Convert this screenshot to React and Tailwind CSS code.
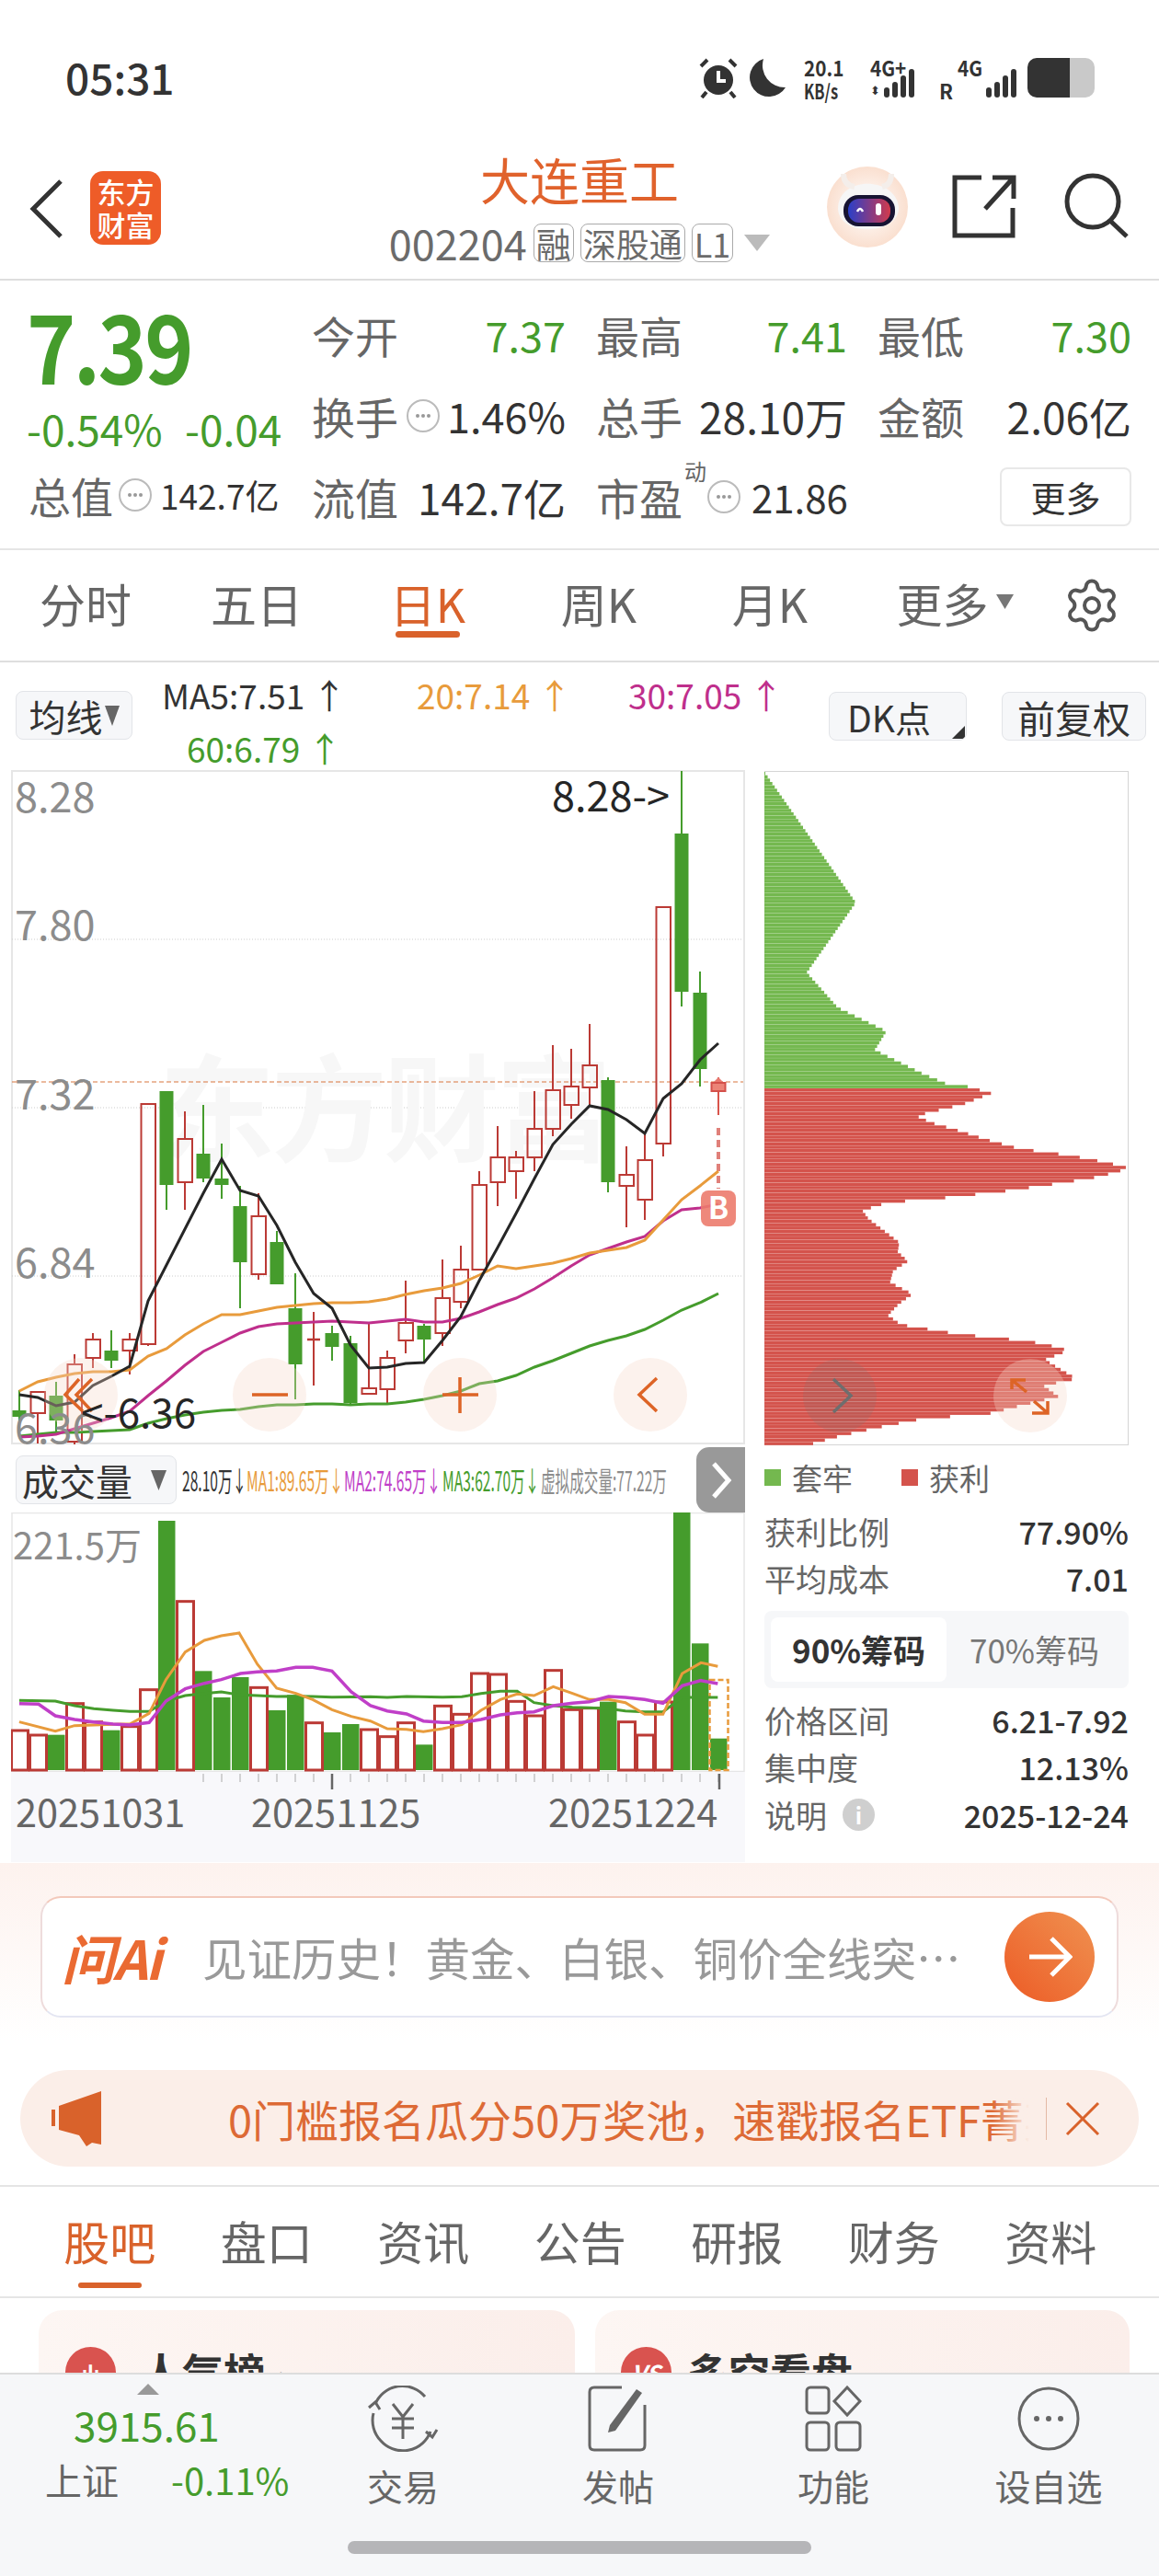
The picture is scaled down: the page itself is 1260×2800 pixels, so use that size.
import { Settings } from 'lucide-react';

const GREEN = '#459c2c';
const RED = '#bb3a35';
const ORANGE = '#e89b3c';

// [wickTop, bodyTop, bodyBottom, wickBottom, green?]
const candles = [
  [1512, 1534, 1541, 1556, true],
  [1514, 1514, 1537, 1570, false],
  [1503, 1518, 1545, 1560, true],
  [1473, 1484, 1568, 1571, false],
  [1450, 1457, 1477, 1488, false],
  [1447, 1469, 1480, 1488, true],
  [1450, 1457, 1469, 1495, false],
  [1201, 1201, 1462, 1464, false],
  [1187, 1187, 1289, 1316, true],
  [1209, 1239, 1286, 1316, false],
  [1202, 1255, 1282, 1286, true],
  [1244, 1282, 1289, 1304, true],
  [1290, 1312, 1373, 1423, true],
  [1298, 1323, 1386, 1392, false],
  [1339, 1351, 1397, 1397, true],
  [1385, 1423, 1484, 1522, true],
  [1427, 1457, 1457, 1507, false],
  [1442, 1450, 1465, 1480, true],
  [1453, 1461, 1526, 1528, true],
  [1440, 1510, 1516, 1516, false],
  [1469, 1477, 1511, 1527, false],
  [1393, 1439, 1458, 1472, false],
  [1440, 1442, 1457, 1482, true],
  [1370, 1412, 1450, 1464, false],
  [1355, 1381, 1416, 1423, false],
  [1274, 1289, 1381, 1381, false],
  [1225, 1259, 1286, 1312, false],
  [1252, 1259, 1274, 1304, false],
  [1187, 1228, 1259, 1274, false],
  [1137, 1186, 1228, 1236, false],
  [1141, 1182, 1202, 1217, false],
  [1114, 1159, 1183, 1203, false],
  [1172, 1175, 1286, 1297, true],
  [1247, 1278, 1290, 1335, false],
  [1233, 1262, 1305, 1327, false],
  [987, 987, 1244, 1258, false],
  [839, 907, 1079, 1095, true],
  [1057, 1080, 1163, 1182, true],
];

const ma5 = [1517, 1520, 1529, 1525, 1507, 1497, 1486, 1415, 1376, 1337, 1298, 1261, 1295, 1301, 1333, 1373, 1407, 1423, 1463, 1488, 1487, 1483, 1482, 1458, 1432, 1393, 1357, 1320, 1282, 1245, 1223, 1203, 1207, 1218, 1233, 1195, 1179, 1153, 1135];
const ma20 = [1513, 1503, 1498, 1494, 1492, 1492, 1490, 1475, 1467, 1452, 1440, 1430, 1430, 1426, 1422, 1420, 1418, 1417, 1417, 1416, 1413, 1408, 1404, 1401, 1396, 1387, 1377, 1380, 1377, 1374, 1369, 1363, 1360, 1357, 1349, 1327, 1305, 1290, 1274];
const ma30 = [1563, 1562, 1560, 1554, 1548, 1542, 1535, 1518, 1502, 1485, 1470, 1460, 1450, 1443, 1440, 1439, 1438, 1437, 1438, 1439, 1437, 1435, 1438, 1438, 1434, 1427, 1419, 1412, 1402, 1390, 1377, 1365, 1358, 1351, 1345, 1328, 1316, 1314, 1310];
const ma60 = [1562, 1560, 1558, 1558, 1557, 1556, 1555, 1548, 1543, 1539, 1536, 1534, 1533, 1530, 1528, 1528, 1527, 1527, 1528, 1527, 1527, 1525, 1522, 1518, 1513, 1505, 1502, 1496, 1487, 1480, 1472, 1464, 1458, 1453, 1446, 1436, 1425, 1417, 1407];

const toPoints = (ys) => ys.map((y, i) => `${21 + 20 * i},${y}`).join(' ');

// volume bars: top y in crop units, green flag
const volBars = [
  [933], [948], [950, 1], [845], [905], [935, 1], [920], [800], [252, 1], [512], [742, 1], [828, 1], [762, 1],
  [793], [870, 1], [820, 1], [908], [942, 1], [915, 1], [930], [953], [908], [982, 1], [853], [880], [747], [750],
  [838], [885], [737], [865], [860], [842, 1], [905], [948], [840], [225, 1], [652, 1], [962, 1],
];
const volY = (y) => 1570 + y / 3;
const volLine = (pts) => pts.map(([x, y]) => `${x / 1.912},${volY(y)}`).join(' ');

const vol1 = [[40, 908], [115, 938], [155, 920], [250, 915], [270, 915], [310, 880], [345, 770], [385, 680], [425, 642], [460, 627], [497, 618], [535, 720], [575, 798], [615, 815], [650, 835], [690, 868], [730, 890], [770, 905], [805, 930], [845, 932], [880, 940], [920, 930], [960, 917], [1000, 870], [1040, 835], [1075, 817], [1110, 822], [1150, 793], [1190, 815], [1225, 835], [1265, 835], [1300, 845], [1340, 883], [1378, 883], [1418, 750], [1457, 715], [1492, 727]];
const vol2 = [[40, 848], [80, 850], [115, 888], [155, 900], [195, 908], [235, 915], [270, 918], [310, 910], [345, 840], [385, 800], [425, 782], [460, 770], [500, 750], [535, 745], [575, 742], [615, 730], [650, 730], [690, 742], [730, 810], [770, 855], [805, 872], [845, 882], [880, 905], [920, 910], [960, 910], [1000, 900], [1040, 885], [1075, 878], [1110, 875], [1150, 855], [1190, 847], [1225, 842], [1265, 825], [1300, 828], [1340, 835], [1378, 847], [1418, 790], [1457, 773], [1492, 783]];
const vol3 = [[40, 838], [115, 840], [155, 855], [195, 865], [235, 870], [270, 874], [310, 874], [345, 840], [385, 822], [425, 815], [460, 810], [500, 820], [535, 822], [575, 825], [615, 824], [650, 825], [690, 827], [770, 826], [805, 828], [845, 825], [920, 827], [960, 826], [1000, 815], [1040, 808], [1075, 808], [1110, 845], [1150, 855], [1190, 860], [1225, 862], [1265, 865], [1300, 872], [1340, 875], [1378, 875], [1418, 828], [1457, 828], [1492, 828]];

// chip profile: [y in crop, width in crop]
const chipProfile = [
  [38, 0], [316, 298], [465, 138], [540, 240], [590, 398], [630, 360], [680, 515], [706, 608],
  [707, 658], [722, 740], [745, 650], [770, 495], [785, 545], [800, 625], [820, 720], [840, 830], [855, 1000],
  [870, 1120], [882, 1190], [900, 1090], [912, 980], [930, 790], [945, 585], [955, 400], [972, 320], [990, 340],
  [1020, 400], [1040, 440], [1060, 435], [1080, 468], [1100, 420], [1125, 410], [1150, 483], [1170, 440],
  [1195, 403], [1215, 445], [1235, 630], [1250, 860], [1262, 950], [1270, 990], [1290, 915], [1310, 965],
  [1330, 1017], [1345, 910], [1368, 958], [1385, 850], [1405, 730], [1415, 520], [1430, 400], [1445, 295],
  [1455, 230], [1470, 150],
];
const chipWidth = (y) => {
  for (let i = 1; i < chipProfile.length; i++) {
    const [y0, w0] = chipProfile[i - 1];
    const [y1, w1] = chipProfile[i];
    if (y <= y1) return (w0 + ((w1 - w0) * (y - y0)) / Math.max(y1 - y0, 1)) / 3;
  }
  return 50;
};
const chipRows = Array.from({ length: 200 }, (_, i) => {
  const top = 839 + i * 3.66;
  return { top, w: chipWidth((top + 1.8 - 820) * 1.96), red: top >= 1180.5 };
});

const DotCircle = () => (
  <span className="inline-flex w-[36px] h-[36px] shrink-0 items-center justify-center gap-[2px] rounded-full border-2 border-[#bbbbbb]">
    <i className="w-[4px] h-[4px] rounded-full bg-[#999999]" />
    <i className="w-[4px] h-[4px] rounded-full bg-[#999999]" />
    <i className="w-[4px] h-[4px] rounded-full bg-[#999999]" />
  </span>
);

const Bars = ({ heights }) => (
  <div className="flex items-end gap-[3px]">
    {heights.map((h, i) => (
      <i key={i} style={{ height: h }} className="w-[6px] rounded-[3px] bg-[#333333]" />
    ))}
  </div>
);

const StatusBar = () => (
  <div className="h-[170px] shrink-0 flex items-start justify-between pl-[71px] pr-[70px] pt-[58px] text-[#333333]">
    <span className="text-[46px] leading-[50px] font-medium">05:31</span>
    <div className="flex items-start h-[44px] mt-[5px]">
      <svg width="44" height="44" viewBox="0 0 44 44">
        <circle cx="22" cy="24" r="16" fill="#333" />
        <path d="M22 14v11h8" stroke="#fff" strokeWidth="4" fill="none" />
        <path d="M3 9 L10 2 M41 9 L34 2 M9 37 L4 43 M35 37 L40 43" stroke="#333" strokeWidth="4" />
      </svg>
      <svg className="ml-[10px]" width="42" height="44" viewBox="0 0 42 44">
        <path d="M17 1 A21 21 0 1 0 41 32 A24 24 0 0 1 17 1Z" fill="#333" />
      </svg>
      <div className="ml-[19px] w-[52px] flex flex-col text-[23px] leading-[20px] font-bold whitespace-nowrap">
        <span className="origin-left scale-x-[0.9]">20.1</span>
        <span className="mt-[7px] text-[22px] leading-[16px] origin-left scale-x-[0.75]">KB/s</span>
      </div>
      <div className="ml-[20px] w-[64px] flex flex-col">
        <span className="text-[23px] leading-[20px] font-bold origin-left scale-x-[0.9] whitespace-nowrap">4G+</span>
        <div className="flex items-end gap-[4px] mt-[-8px] h-[31px]">
          <span className="text-[13px] leading-[13px] mb-[2px]">⬍</span>
          <Bars heights={[11, 17, 24, 31]} />
        </div>
      </div>
      <div className="ml-[11px] w-[18px] self-end text-[22px] leading-[17px] font-bold">R</div>
      <div className="ml-[2px] w-[66px] flex flex-col">
        <span className="text-[23px] leading-[20px] font-bold origin-left scale-x-[0.9] whitespace-nowrap">4G</span>
        <div className="flex justify-end mt-[-8px] h-[31px] items-end pr-[2px]">
          <Bars heights={[11, 17, 24, 31]} />
        </div>
      </div>
      <div className="ml-[10px] w-[73px] h-[43px] flex overflow-hidden rounded-[10px]">
        <div className="w-[46px] bg-[#333333]" />
        <div className="flex-1 bg-[#c9c9c9]" />
      </div>
    </div>
  </div>
);

const Header = () => (
  <div className="h-[135px] shrink-0 flex border-b-2 border-[#dedede] relative">
    <div className="w-[361px] flex items-start pl-[32px] pt-[22px]">
      <svg width="38" height="66" viewBox="0 0 38 66" className="mt-[2px]">
        <path d="M34 3 L4 33 L34 63" stroke="#333" strokeWidth="5" fill="none" />
      </svg>
      <div className="ml-[28px] mt-[-6px] w-[77px] h-[80px] rounded-[14px] bg-[#ee5c28] flex flex-col items-center justify-center text-white text-[31px] leading-[36px] font-medium">
        <span>东方</span>
        <span>财富</span>
      </div>
    </div>
    <div className="flex-1 flex flex-col items-center">
      <span className="text-[54px] leading-[64px] text-[#e0622c] mt-[-7px]">大连重工</span>
      <div className="flex items-center gap-[7px] mt-[15px] text-[#6b6b6b]">
        <span className="text-[45px] leading-[44px]">002204</span>
        <span className="h-[42px] px-[2px] flex items-center border border-[#aaaaaa] rounded-[8px] text-[38px] leading-[40px]">融</span>
        <span className="h-[42px] px-[2px] flex items-center border border-[#aaaaaa] rounded-[8px] text-[36px] leading-[40px]">深股通</span>
        <span className="h-[42px] px-[2px] flex items-center border border-[#aaaaaa] rounded-[8px] text-[36px] leading-[40px]">L1</span>
        <svg width="28" height="18" viewBox="0 0 28 18" className="ml-[5px]"><path d="M0 0h28L14 18z" fill="#bbb" /></svg>
      </div>
    </div>
    <div className="w-[361px] flex items-start pl-[0px] pt-[11px] ">
      <svg width="88" height="88" viewBox="0 0 88 88">
        <defs>
          <radialGradient id="av" cx="0.5" cy="0.5" r="0.6"><stop offset="0" stopColor="#ffffff" /><stop offset="1" stopColor="#f9d9c6" /></radialGradient>
          <linearGradient id="visor" x1="0" x2="1"><stop offset="0" stopColor="#2a3fc8" /><stop offset="1" stopColor="#d23a4c" /></linearGradient>
        </defs>
        <circle cx="44" cy="44" r="44" fill="url(#av)" />
        <path d="M12 46 C12 10 74 10 78 44 C80 74 14 78 12 46Z" fill="#f6f6f6" />
        <path d="M18 8 Q18 20 30 22 M70 8 Q70 20 60 22" stroke="#f4eeea" strokeWidth="6" fill="none" />
        <rect x="18" y="31" width="56" height="34" rx="16" fill="#171433" />
        <rect x="23" y="35" width="46" height="26" rx="12" fill="url(#visor)" />
        <path d="M33 49 q3 -6 6 0" stroke="#fff" strokeWidth="2.5" fill="none" />
        <rect x="53" y="40" width="6" height="13" rx="3" fill="#fff" />
      </svg>
      <svg width="70" height="70" viewBox="0 0 70 70" className="ml-[48px] mt-[9px]">
        <path d="M32 3 H3 V66 H66 V36 M36 37 L66 4 M44 3 H67 V26" stroke="#333" strokeWidth="5" fill="none" />
      </svg>
      <svg width="72" height="72" viewBox="0 0 72 72" className="ml-[52px] mt-[7px]">
        <circle cx="31" cy="31" r="28" stroke="#333" strokeWidth="5" fill="none" />
        <path d="M50 52 L68 69" stroke="#333" strokeWidth="5" fill="none" />
      </svg>
    </div>
  </div>
);

const Quote = () => (
  <div className="h-[293px] shrink-0 flex border-b-2 border-[#e5e5e5]">
    <div className="w-[339px] pl-[29px] flex flex-col">
      <span className="text-[104px] leading-[100px] font-bold tracking-[-3px] mt-[18px] origin-left scale-x-[0.87]" style={{ color: GREEN }}>7.39</span>
      <div className="flex mt-[20px] text-[46px] leading-[44px] text-[#459c2c] whitespace-nowrap">
        <span className="w-[172px]">-0.54%</span>
        <span>-0.04</span>
      </div>
      <div className="flex items-center mt-[26px] text-[#666666]">
        <span className="text-[46px] leading-[50px] ml-[2px] w-[98px]">总值</span>
        <DotCircle />
        <span className="text-[37px] leading-[50px] ml-[9px] text-[#333333]">142.7亿</span>
      </div>
    </div>
    <div className="flex-1 grid grid-cols-[276px_273px_276px] gap-x-[33px] content-start pt-[15px] text-[47px] leading-[88px] text-[#666666] whitespace-nowrap">
      <div className="flex justify-between"><span>今开</span><span className="text-[#459c2c] text-[45px]">7.37</span></div>
      <div className="flex justify-between"><span>最高</span><span className="text-[#459c2c] text-[45px]">7.41</span></div>
      <div className="flex justify-between"><span>最低</span><span className="text-[#459c2c] text-[45px]">7.30</span></div>
      <div className="flex justify-between items-center"><span>换手</span><DotCircle /><span className="text-[#333333] text-[45px]">1.46%</span></div>
      <div className="flex justify-between"><span>总手</span><span className="text-[#333333] text-[46px]">28.10万</span></div>
      <div className="flex justify-between"><span>金额</span><span className="text-[#333333] text-[46px]">2.06亿</span></div>
      <div className="flex justify-between"><span>流值</span><span className="text-[#333333] text-[46px]">142.7亿</span></div>
      <div className="flex items-center relative">
        <span className="shrink-0">市盈</span>
        <span className="absolute left-[96px] top-[2px] text-[24px] leading-[28px]">动</span>
        <span className="ml-[27px] flex shrink-0"><DotCircle /></span>
        <span className="text-[#333333] text-[42px] ml-[12px] shrink-0">21.86</span>
      </div>
      <div className="flex justify-end items-center">
        <span className="w-[143px] h-[64px] border-2 border-[#e8e8e8] rounded-[8px] flex items-center justify-center text-[38px] leading-[40px] text-[#333333]">更多</span>
      </div>
    </div>
  </div>
);

const PeriodTabs = () => (
  <div className="h-[122px] shrink-0 grid grid-cols-[repeat(6,186px)_144px] border-b-2 border-[#dedede] text-[50px] text-[#666666]">
    {['分时', '五日', '日K', '周K', '月K'].map((t) => (
      <div key={t} className="flex flex-col items-center pt-[25px]">
        <span className={`leading-[64px] ${t === '日K' ? 'text-[#d9622b]' : ''}`}>{t}</span>
        {t === '日K' && <i className="w-[70px] h-[7px] mt-[-1px] rounded-full bg-[#d9622b]" />}
      </div>
    ))}
    <div className="flex items-start justify-center pt-[25px] gap-[8px] pl-[30px]">
      <span className="leading-[64px] whitespace-nowrap">更多</span>
      <svg width="19" height="16" viewBox="0 0 19 16" className="mt-[23px] shrink-0"><path d="M0 0h19L9.5 16z" fill="#777" /></svg>
    </div>
    <div className="flex justify-center pt-[28px] pr-[2px]">
      <Settings size={64} strokeWidth={1.5} color="#555555" />
    </div>
  </div>
);

const MaRow = () => (
  <div className="h-[117px] shrink-0 flex relative text-[37px] leading-[50px]">
    <div className="ml-[17px] mt-[31px] w-[127px] h-[53px] shrink-0 bg-[#f6f7f9] border border-[#e2e4e8] rounded-[8px] flex items-center justify-center gap-[2px] text-[#333333] text-[40px]">
      <span className="leading-[44px]">均线</span>
      <svg width="16" height="22" viewBox="0 0 16 22"><path d="M0 0h16L8 22z" fill="#666" /></svg>
    </div>
    <div className="ml-[32px] w-[700px] flex flex-wrap content-start pt-[10px] gap-y-[8px]">
      <span className="w-[277px] text-[#333333] whitespace-nowrap">MA5:7.51 ↑</span>
      <span className="w-[230px] text-[#e89b3c] whitespace-nowrap">20:7.14 ↑</span>
      <span className="w-[193px] text-[#bf2f8c] whitespace-nowrap">30:7.05 ↑</span>
      <span className="ml-[27px] text-[#459c2c] whitespace-nowrap">60:6.79 ↑</span>
    </div>
    <div className="absolute left-[901px] top-[32px] w-[150px] h-[53px] bg-[#f6f7f9] border border-[#e2e4e8] rounded-[8px] flex items-center pl-[19px] text-[#333333] text-[39px] overflow-hidden">
      <span>DK点</span>
      <span className="absolute right-[1px] bottom-[1px] w-0 h-0 border-l-[14px] border-l-transparent border-b-[14px] border-b-[#333333]" />
    </div>
    <div className="absolute left-[1089px] top-[32px] w-[157px] h-[53px] bg-[#f6f7f9] border border-[#e2e4e8] rounded-[8px] flex items-center justify-center text-[#333333] text-[41px]">前复权</div>
  </div>
);

const Candle = ({ c, i }) => {
  const [top, bTop, bBot, bottom, isGreen] = c;
  const x = 21 + 20 * i;
  const color = isGreen ? GREEN : RED;
  return (
    <g>
      <line x1={x} x2={x} y1={top} y2={bTop} stroke={color} strokeWidth="2" />
      <line x1={x} x2={x} y1={bBot} y2={bottom} stroke={color} strokeWidth="2" />
      {bBot === bTop ? (
        <line x1={x - 7} x2={x + 7} y1={bTop} y2={bTop} stroke={color} strokeWidth="2.5" />
      ) : isGreen ? (
        <rect x={x - 7.5} y={bTop} width="15" height={bBot - bTop} fill={color} />
      ) : (
        <rect x={x - 7.5} y={bTop} width="15.5" height={bBot - bTop} fill="none" stroke={color} strokeWidth="2" />
      )}
    </g>
  );
};

const OverlayCircle = ({ cx, children }) => (
  <g>
    <circle cx={cx} cy="1517" r="40" fill="#f6d8c6" fillOpacity="0.32" />
    <g stroke="#dd6426" strokeWidth="3.5" fill="none">{children}</g>
  </g>
);

const KChart = () => (
  <svg width="798" height="733" viewBox="12 838 798 733" className="block ml-[12px]">
    <rect x="13" y="839" width="796" height="731" fill="#fff" stroke="#e6e6e6" strokeWidth="2" />
    {[1022, 1205, 1388].map((y) => (
      <line key={y} x1="13" x2="808" y1={y} y2={y} stroke="#cccccc" strokeWidth="1" strokeDasharray="1 2" />
    ))}
    <text x="173" y="1254" fontSize="126" fill="#f7f7f7" fontWeight="700" letterSpacing="-4">东方财富</text>
    <line x1="13" x2="808" y1="1177" y2="1177" stroke="#d9763f" strokeWidth="1.2" strokeDasharray="5 3" />
    {candles.map((c, i) => <Candle key={i} c={c} i={i} />)}

    {/* today's candle and buy mark */}
    <line x1="781" x2="781" y1="1172" y2="1213" stroke="#d9544c" strokeWidth="2" />
    <path d="M775 1178 L781 1172 L787 1178Z" fill="#e8796f" />
    <rect x="773.5" y="1178" width="15" height="9" fill="#ec8477" stroke="#d4504a" strokeWidth="2" />
    <line x1="781" x2="781" y1="1227" y2="1293" stroke="#e0807a" strokeWidth="4" strokeDasharray="8 5" />

    <polyline points={toPoints(ma60)} fill="none" stroke={GREEN} strokeWidth="3" />
    <polyline points={toPoints(ma30)} fill="none" stroke="#bf2f8c" strokeWidth="3" />
    <polyline points={toPoints(ma20)} fill="none" stroke={ORANGE} strokeWidth="3" />
    <polyline points={toPoints(ma5)} fill="none" stroke="#262626" strokeWidth="3" />

    <rect x="762" y="1295" width="38" height="39" rx="8" fill="#ec7b6d" fillOpacity="0.9" />
    <text x="781" y="1326" fontSize="33" fontWeight="700" fill="#fff" textAnchor="middle">B</text>

    <OverlayCircle cx="88">
      <path d="M86 1500 L71 1517 L90 1535 M100 1500 L83 1517 L100 1535" />
    </OverlayCircle>
    <OverlayCircle cx="293"><path d="M274 1517 H313" /></OverlayCircle>
    <OverlayCircle cx="500"><path d="M481 1517 H520 M500 1498 V1537" /></OverlayCircle>
    <OverlayCircle cx="707"><path d="M714 1499 L695 1517 L714 1535" /></OverlayCircle>

    <g fontSize="45" fill="#8c8c8c">
      <text x="16" y="884">8.28</text>
      <text x="16" y="1023">7.80</text>
      <text x="16" y="1207">7.32</text>
      <text x="16" y="1390">6.84</text>
      <text x="16" y="1570">6.36</text>
    </g>
    <text x="600" y="883" fontSize="45" fill="#262626">8.28-&gt;</text>
    <text x="88" y="1553" fontSize="44" fill="#262626">&lt;-6.36</text>
  </svg>
);

const VolLegend = () => (
  <div className="h-[74px] shrink-0 flex items-start relative">
    <div className="ml-[17px] mt-[12px] w-[175px] h-[53px] shrink-0 bg-[#f6f7f9] border border-[#e2e4e8] rounded-[8px] flex items-center justify-between pl-[6px] pr-[10px] text-[#333333] text-[40px]">
      <span className="leading-[44px]">成交量</span>
      <svg width="17" height="22" viewBox="0 0 17 22"><path d="M0 0h17L8.5 22z" fill="#666" /></svg>
    </div>
    <div className="ml-[6px] mt-[22px] flex text-[30px] leading-[32px] whitespace-nowrap">
      <span className="w-[70px] text-[#333333] origin-left scale-x-[0.52]">28.10万↓</span>
      <span className="w-[106px] text-[#e89b3c] origin-left scale-x-[0.52]">MA1:89.65万↓</span>
      <span className="w-[107px] text-[#c03fc8] origin-left scale-x-[0.52]">MA2:74.65万↓</span>
      <span className="w-[107px] text-[#459c2c] origin-left scale-x-[0.52]">MA3:62.70万↓</span>
      <span className="text-[#8c8c8c] origin-left scale-x-[0.52]">虚拟成交量:77.22万</span>
    </div>
    <div className="absolute left-[757px] top-[3px] w-[53px] h-[71px] bg-[#999999] rounded-l-[14px] flex items-center justify-center">
      <svg width="24" height="42" viewBox="0 0 24 42"><path d="M4 3 L20 21 L4 39" stroke="#fff" strokeWidth="5" fill="none" /></svg>
    </div>
  </div>
);

const VolumeChart = () => (
  <svg width="798" height="282" viewBox="12 1645 798 282" className="block ml-[12px]">
    <rect x="13" y="1645.5" width="796" height="281" fill="#fff" stroke="#e6e6e6" strokeWidth="1.5" />
    {volBars.map(([top, isGreen], i) => {
      const x = 21 + 20 * i;
      const y = volY(top);
      return isGreen ? (
        <rect key={i} x={x - 9} y={y} width="18.5" height={1925 - y} fill={GREEN} />
      ) : (
        <rect key={i} x={x - 8.5} y={y + 1} width="18" height={1924 - y} fill="none" stroke={RED} strokeWidth="3" />
      );
    })}
    <rect x="771.5" y="1827" width="20" height="98" fill="none" stroke={ORANGE} strokeWidth="2.5" strokeDasharray="6 3" />
    <polyline points={volLine(vol3)} fill="none" stroke={GREEN} strokeWidth="3" />
    <polyline points={volLine(vol1)} fill="none" stroke={ORANGE} strokeWidth="3" />
    <polyline points={volLine(vol2)} fill="none" stroke="#c03fc8" strokeWidth="3.5" />
    <text x="14" y="1696" fontSize="40" fill="#8c8c8c">221.5万</text>
  </svg>
);

const DateAxis = () => (
  <div className="ml-[12px] w-[798px] h-[98px] shrink-0 bg-[#f8f8fb] relative">
    <svg width="798" height="22" viewBox="12 1926 798 22" className="block">
      {Array.from({ length: 29 }, (_, i) => (
        <line key={i} x1={221 + 20 * i} x2={221 + 20 * i} y1="1928" y2="1937" stroke="#aaaaaa" strokeWidth="1" />
      ))}
      <line x1="361" x2="361" y1="1928" y2="1945" stroke="#666" strokeWidth="2.5" />
      <line x1="782" x2="782" y1="1928" y2="1945" stroke="#666" strokeWidth="2.5" />
    </svg>
    <div className="flex text-[#666666] text-[41.5px] leading-[44px] mt-[-2px] pl-[5px]">
      <span className="w-[256px]">20251031</span>
      <span className="w-[323px]">20251125</span>
      <span>20251224</span>
    </div>
  </div>
);

const StatRow = ({ label, value, children }) => (
  <div className="flex items-center justify-between text-[34px] leading-[40px] h-[51.5px]">
    <span className="text-[#666666] flex items-center gap-[17px]">{label}{children}</span>
    <span className="text-[#333333] font-medium">{value}</span>
  </div>
);

const ChipPanel = () => (
  <div className="w-[396px] ml-[20px] mt-[1px] flex flex-col">
    <svg width="397" height="733" viewBox="831 838 397 733" className="block">
      <rect x="831.5" y="838.5" width="395" height="732" fill="#fff" stroke="#d5d5d5" strokeWidth="1" />
      {chipRows.map((r) => (
        <rect key={r.top} x="831" y={r.top} width={r.w} height="3.5" fill={r.red ? '#d4534c' : '#74b84f'} />
      ))}
      <circle cx="913" cy="1517" r="40" fill="#777" fillOpacity="0.18" />
      <path d="M906 1499 L925 1517 L906 1535" stroke="#6e6e6e" strokeWidth="3.5" fill="none" />
      <circle cx="1120" cy="1517" r="40" fill="#f6d8c6" fillOpacity="0.32" />
      <path d="M1100 1510 V1500 H1115 M1100 1500 L1116 1513 M1139 1523 V1536 H1122 M1139 1536 L1124 1523" stroke="#dd6426" strokeWidth="3.5" fill="none" />
    </svg>
    <div className="flex items-center h-[68px] pt-[2px] text-[33px] text-[#666666]">
      <i className="w-[18px] h-[18px] bg-[#74b84f]" />
      <span className="ml-[12px] w-[119px] leading-[40px]">套牢</span>
      <i className="w-[18px] h-[18px] bg-[#d4534c]" />
      <span className="ml-[12px] leading-[40px]">获利</span>
    </div>
    <StatRow label="获利比例" value="77.90%" />
    <StatRow label="平均成本" value="7.01" />
    <div className="mt-[9px] h-[84px] bg-[#f6f7f9] rounded-[8px] flex items-center p-[7px] text-[35px]">
      <span className="w-[191px] h-[70px] bg-white rounded-[8px] flex items-center justify-center font-bold text-[#333333]">90%筹码</span>
      <span className="flex-1 text-center text-[#777777]">70%筹码</span>
    </div>
    <div className="mt-[9px]">
      <StatRow label="价格区间" value="6.21-7.92" />
      <StatRow label="集中度" value="12.13%" />
      <StatRow label="说明" value="2025-12-24">
        <span className="w-[35px] h-[35px] rounded-full bg-[#cfcfcf] flex items-center justify-center text-white text-[24px] font-bold">i</span>
      </StatRow>
    </div>
  </div>
);

const AskAi = () => (
  <div className="h-[352px] shrink-0 bg-linear-to-b from-[#fdf2ee] to-white to-55% border-b-2 border-[#e5e5e5] pt-[36px] flex flex-col">
    <div className="mx-[44px] h-[132px] rounded-[22px] bg-white border-2 border-t-[#f3c9bb] border-x-[#eedcdc] border-b-[#e4e6f2] flex items-center pl-[21px] pr-[24px]">
      <span className="w-[129px] text-[58px] leading-[60px] font-bold italic tracking-[-2px] text-[#ea6a32] shrink-0">问Ai</span>
      <span className="ml-[24px] flex-1 text-[48.5px] leading-[54px] text-[#999999] whitespace-nowrap overflow-hidden">见证历史！黄金、白银、铜价全线突…</span>
      <span className="w-[98px] h-[98px] rounded-full bg-linear-to-tr from-[#ec5a24] to-[#ef9150] flex items-center justify-center shrink-0">
        <svg width="50" height="46" viewBox="0 0 50 46"><path d="M3 23 H46 M27 3 L47 23 L27 43" stroke="#fff" strokeWidth="5" fill="none" /></svg>
      </span>
    </div>
    <div className="mt-[57px] mx-[22px] h-[105px] rounded-full bg-[#fbeee8] flex items-center relative">
      <svg width="54" height="60" viewBox="0 0 54 60" className="ml-[34px] shrink-0">
        <path d="M0 20 H4 V38 H0Z M8 16 L54 0 V58 L44 56 L38 60 L30 48 L8 42Z" fill="#d9622b" />
      </svg>
      <div className="ml-[138px] w-[871px] overflow-hidden text-[47px] leading-[56px] text-[#dd6a35] whitespace-nowrap relative">
        0门槛报名瓜分50万奖池，速戳报名ETF菁英
        <i className="absolute right-0 top-0 h-full w-[40px] bg-linear-to-r from-transparent to-[#fbeee8]" />
      </div>
      <i className="absolute left-[1115px] top-[30px] w-[1px] h-[46px] bg-[#e3b9a5]" />
      <svg width="38" height="38" viewBox="0 0 38 38" className="absolute left-[1136px] top-[34px]">
        <path d="M2 2 L36 36 M36 2 L2 36" stroke="#d9622b" strokeWidth="3" />
      </svg>
    </div>
  </div>
);

const InfoTabs = () => (
  <div className="h-[121px] shrink-0 flex pl-[34px] border-b-2 border-[#e5e5e5] text-[50px] text-[#666666]">
    {['股吧', '盘口', '资讯', '公告', '研报', '财务', '资料'].map((t, i) => (
      <div key={t} className="w-[170.5px] flex flex-col items-center pt-[29px]">
        <span className={`leading-[58px] ${i === 0 ? 'text-[#d9622b]' : ''}`}>{t}</span>
        {i === 0 && <i className="w-[69px] h-[6px] mt-[17px] rounded-full bg-[#d9622b]" />}
      </div>
    ))}
  </div>
);

const RankCards = () => (
  <div className="flex-1 flex gap-[22px] pl-[42px] pr-[32px] pt-[13px] overflow-hidden">
    <div className="w-[583px] shrink-0 h-[180px] rounded-[26px] bg-linear-to-r from-[#fdf6f3] to-[#fbeeea] flex items-start pl-[29px] pt-[40px]">
      <span className="w-[55px] h-[55px] rounded-full bg-[#d9534f] flex items-center justify-center text-white text-[22px] font-bold shrink-0">ılı</span>
      <span className="ml-[27px] text-[45px] leading-[54px] font-bold text-[#333333]">人气榜</span>
      <span className="ml-[14px] text-[34px] leading-[60px] text-[#aaaaaa]">›</span>
    </div>
    <div className="w-[581px] shrink-0 h-[180px] rounded-[26px] bg-linear-to-r from-[#fdf6f3] to-[#fbeeea] flex items-start pl-[28px] pt-[40px]">
      <span className="w-[55px] h-[55px] rounded-full bg-[#d9534f] flex items-center justify-center text-white text-[26px] font-bold italic shrink-0">VS</span>
      <span className="ml-[17px] text-[45px] leading-[54px] font-bold text-[#333333]">多空看盘</span>
    </div>
  </div>
);

const NavItem = ({ label, children }) => (
  <div className="w-[234px] flex flex-col items-center pt-[6px]">
    <div className="h-[84px] flex items-center justify-center">{children}</div>
    <span className="text-[39px] leading-[46px] text-[#666666] mt-[7px]">{label}</span>
  </div>
);

const BottomNav = () => (
  <div className="h-[221px] shrink-0 bg-[#f6f7f9] border-t-2 border-[#dddddd] relative flex">
    <div className="w-[321px] shrink-0 flex flex-col">
      <svg width="24" height="12" viewBox="0 0 24 12" className="ml-[149px] mt-[10px]"><path d="M12 0 L24 12 H0Z" fill="#999" /></svg>
      <span className="ml-[80px] mt-[7px] text-[44px] leading-[50px] text-[#459c2c]">3915.61</span>
      <div className="flex ml-[49px] mt-[12px] text-[40px] leading-[46px]">
        <span className="w-[137px] text-[#666666]">上证</span>
        <span className="text-[#459c2c]">-0.11%</span>
      </div>
    </div>
    <NavItem label="交易">
      <svg width="80" height="72" viewBox="0 0 80 72" fill="none" stroke="#666" strokeWidth="3">
        <path d="M10 20 A32 32 0 0 1 64 12 M70 50 A32 32 0 0 1 16 60 A32 32 0 0 1 8 30" />
        <path d="M3 24 L10 18 L15 26 M65 50 L72 56 L77 48" />
        <path d="M29 20 L40 34 L51 20 M28 36 H52 M28 46 H52 M40 34 V58" />
      </svg>
    </NavItem>
    <NavItem label="发帖">
      <svg width="68" height="74" viewBox="0 0 68 74" fill="none" stroke="#666" strokeWidth="3">
        <path d="M38 3 H8 Q3 3 3 8 V66 Q3 71 8 71 H58 Q63 71 63 66 V22" />
        <path d="M25 44 L54 5 L60 9 L31 50 L23 52Z" fill="#666" stroke="none" />
      </svg>
    </NavItem>
    <NavItem label="功能">
      <svg width="62" height="72" viewBox="0 0 62 72" fill="none" stroke="#666" strokeWidth="3">
        <rect x="2" y="2" width="24" height="28" rx="4" />
        <path d="M46 2 L60 17 L46 32 L32 17Z" />
        <rect x="2" y="40" width="24" height="30" rx="4" />
        <rect x="34" y="40" width="26" height="30" rx="4" />
      </svg>
    </NavItem>
    <NavItem label="设自选">
      <svg width="70" height="72" viewBox="0 0 70 72" fill="none" stroke="#666" strokeWidth="3">
        <ellipse cx="35" cy="36" rx="32" ry="33" />
        <circle cx="22" cy="36" r="3" fill="#666" stroke="none" />
        <circle cx="35" cy="36" r="3" fill="#666" stroke="none" />
        <circle cx="48" cy="36" r="3" fill="#666" stroke="none" />
      </svg>
    </NavItem>
    <i className="absolute left-[378px] top-[181px] w-[504px] h-[14px] rounded-full bg-[#b5b5b8]" />
  </div>
);

export default function App() {
  return (
    <div className="w-[1260px] h-[2800px] flex flex-col overflow-hidden bg-white font-['Noto_Sans_CJK_SC',sans-serif]">
      <StatusBar />
      <Header />
      <Quote />
      <PeriodTabs />
      <MaRow />
      <div className="h-[1188px] shrink-0 flex">
        <div className="w-[811px] shrink-0 flex flex-col">
          <KChart />
          <VolLegend />
          <VolumeChart />
          <DateAxis />
        </div>
        <ChipPanel />
      </div>
      <AskAi />
      <InfoTabs />
      <RankCards />
      <BottomNav />
    </div>
  );
}
